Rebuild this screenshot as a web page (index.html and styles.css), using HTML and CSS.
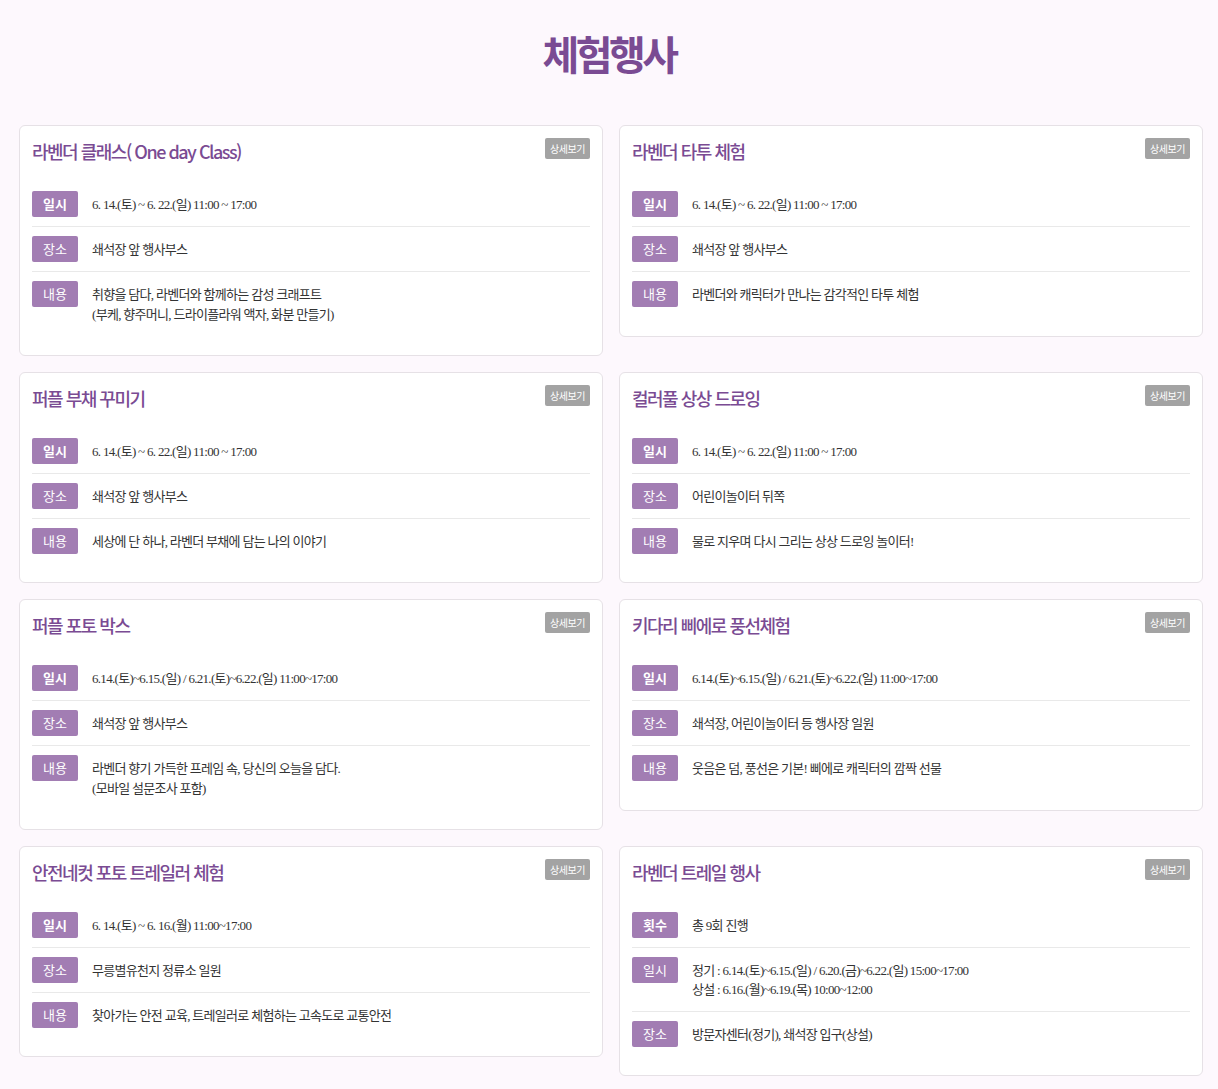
FILE: index.html
```html
<!DOCTYPE html>
<html lang="ko">
<head>
<meta charset="utf-8">
<title>체험행사</title>
<link rel="stylesheet" href="styles.css">
</head>
<body>
<h1 class="page-title">체험행사</h1>
<div class="grid">
  <div class="card">
    <div class="card-head"><h2 class="card-title">라벤더 클래스( One day Class)</h2><span class="more">상세보기</span></div>
    <ul class="rows">
      <li class="row"><span class="tag tag-strong">일시</span><div class="val">6. 14.(토) ~ 6. 22.(일) 11:00 ~ 17:00</div></li>
      <li class="row"><span class="tag">장소</span><div class="val">쇄석장 앞 행사부스</div></li>
      <li class="row"><span class="tag">내용</span><div class="val">취향을 담다, 라벤더와 함께하는 감성 크래프트<br>(부케, 향주머니, 드라이플라워 액자, 화분 만들기)</div></li>
    </ul>
  </div>
  <div class="card">
    <div class="card-head"><h2 class="card-title">라벤더 타투 체험</h2><span class="more">상세보기</span></div>
    <ul class="rows">
      <li class="row"><span class="tag tag-strong">일시</span><div class="val">6. 14.(토) ~ 6. 22.(일) 11:00 ~ 17:00</div></li>
      <li class="row"><span class="tag">장소</span><div class="val">쇄석장 앞 행사부스</div></li>
      <li class="row"><span class="tag">내용</span><div class="val">라벤더와 캐릭터가 만나는 감각적인 타투 체험</div></li>
    </ul>
  </div>
  <div class="card">
    <div class="card-head"><h2 class="card-title">퍼플 부채 꾸미기</h2><span class="more">상세보기</span></div>
    <ul class="rows">
      <li class="row"><span class="tag tag-strong">일시</span><div class="val">6. 14.(토) ~ 6. 22.(일) 11:00 ~ 17:00</div></li>
      <li class="row"><span class="tag">장소</span><div class="val">쇄석장 앞 행사부스</div></li>
      <li class="row"><span class="tag">내용</span><div class="val">세상에 단 하나, 라벤더 부채에 담는 나의 이야기</div></li>
    </ul>
  </div>
  <div class="card">
    <div class="card-head"><h2 class="card-title">컬러풀 상상 드로잉</h2><span class="more">상세보기</span></div>
    <ul class="rows">
      <li class="row"><span class="tag tag-strong">일시</span><div class="val">6. 14.(토) ~ 6. 22.(일) 11:00 ~ 17:00</div></li>
      <li class="row"><span class="tag">장소</span><div class="val">어린이놀이터 뒤쪽</div></li>
      <li class="row"><span class="tag">내용</span><div class="val">물로 지우며 다시 그리는 상상 드로잉 놀이터!</div></li>
    </ul>
  </div>
  <div class="card">
    <div class="card-head"><h2 class="card-title">퍼플 포토 박스</h2><span class="more">상세보기</span></div>
    <ul class="rows">
      <li class="row"><span class="tag tag-strong">일시</span><div class="val">6.14.(토)~6.15.(일) / 6.21.(토)~6.22.(일) 11:00~17:00</div></li>
      <li class="row"><span class="tag">장소</span><div class="val">쇄석장 앞 행사부스</div></li>
      <li class="row"><span class="tag">내용</span><div class="val">라벤더 향기 가득한 프레임 속, 당신의 오늘을 담다.<br>(모바일 설문조사 포함)</div></li>
    </ul>
  </div>
  <div class="card">
    <div class="card-head"><h2 class="card-title">키다리 삐에로 풍선체험</h2><span class="more">상세보기</span></div>
    <ul class="rows">
      <li class="row"><span class="tag tag-strong">일시</span><div class="val">6.14.(토)~6.15.(일) / 6.21.(토)~6.22.(일) 11:00~17:00</div></li>
      <li class="row"><span class="tag">장소</span><div class="val">쇄석장, 어린이놀이터 등 행사장 일원</div></li>
      <li class="row"><span class="tag">내용</span><div class="val">웃음은 덤, 풍선은 기본! 삐에로 캐릭터의 깜짝 선물</div></li>
    </ul>
  </div>
  <div class="card">
    <div class="card-head"><h2 class="card-title">안전네컷 포토 트레일러 체험</h2><span class="more">상세보기</span></div>
    <ul class="rows">
      <li class="row"><span class="tag tag-strong">일시</span><div class="val">6. 14.(토) ~ 6. 16.(월) 11:00~17:00</div></li>
      <li class="row"><span class="tag">장소</span><div class="val">무릉별유천지 정류소 일원</div></li>
      <li class="row"><span class="tag">내용</span><div class="val">찾아가는 안전 교육, 트레일러로 체험하는 고속도로 교통안전</div></li>
    </ul>
  </div>
  <div class="card">
    <div class="card-head"><h2 class="card-title">라벤더 트레일 행사</h2><span class="more">상세보기</span></div>
    <ul class="rows">
      <li class="row"><span class="tag tag-strong">횟수</span><div class="val">총 9회 진행</div></li>
      <li class="row"><span class="tag">일시</span><div class="val">정기 : 6.14.(토)~6.15.(일) / 6.20.(금)~6.22.(일) 15:00~17:00<br>상설 : 6.16.(월)~6.19.(목) 10:00~12:00</div></li>
      <li class="row"><span class="tag">장소</span><div class="val">방문자센터(정기), 쇄석장 입구(상설)</div></li>
    </ul>
  </div>
</div>
</body>
</html>
```

FILE: styles.css
```css
html, body {
  margin: 0;
  padding: 0;
}
body {
  background: #fdf8fd;
  font-family: "Noto Sans CJK KR", "Noto Sans", sans-serif;
  color: #333;
}
.page-title {
  margin: 0;
  padding-top: 28px;
  height: 50px;
  line-height: 50px;
  font-size: 40px;
  font-weight: 700;
  letter-spacing: -3.5px;
  text-align: center;
  color: #7a4b93;
  margin-bottom: 47px;
}
.grid {
  display: grid;
  grid-template-columns: 584px 584px;
  column-gap: 16px;
  row-gap: 16px;
  align-items: start;
  padding: 0 15px 13px 19px;
}
.card {
  background: #fff;
  border: 1px solid #e6e1e6;
  border-radius: 6px;
  padding: 12px 12px 19.5px 12px;
}
.card-head {
  display: flex;
  justify-content: space-between;
  align-items: flex-start;
  margin-bottom: 18px;
}
.card-title {
  margin: 0;
  font-size: 18px;
  line-height: 26px;
  font-weight: 500;
  letter-spacing: -1.5px;
  color: #7a4b93;
}
.more {
  display: block;
  width: 45px;
  height: 21px;
  line-height: 21px;
  background: #a3a3a3;
  color: #fff;
  font-size: 10px;
  letter-spacing: -0.5px;
  text-align: center;
  border-radius: 2px;
}
.rows {
  list-style: none;
  margin: 0;
  padding: 0;
}
.row {
  display: flex;
  align-items: flex-start;
  gap: 14px;
  padding: 9px 0;
  border-bottom: 1px solid #e9e9e9;
}
.row:last-child {
  border-bottom: 0;
}
.tag {
  flex-shrink: 0;
  width: 46px;
  height: 26px;
  line-height: 26px;
  text-align: center;
  background: #a27db3;
  color: #fff;
  font-size: 13px;
  border-radius: 2px;
}
.tag-strong {
  font-weight: 700;
}
.val {
  padding: 4px 0 2px;
  font-family: "Liberation Serif", "Noto Sans CJK KR", serif;
  font-size: 13px;
  line-height: 19.5px;
  letter-spacing: -0.7px;
  color: #333;
}
```
